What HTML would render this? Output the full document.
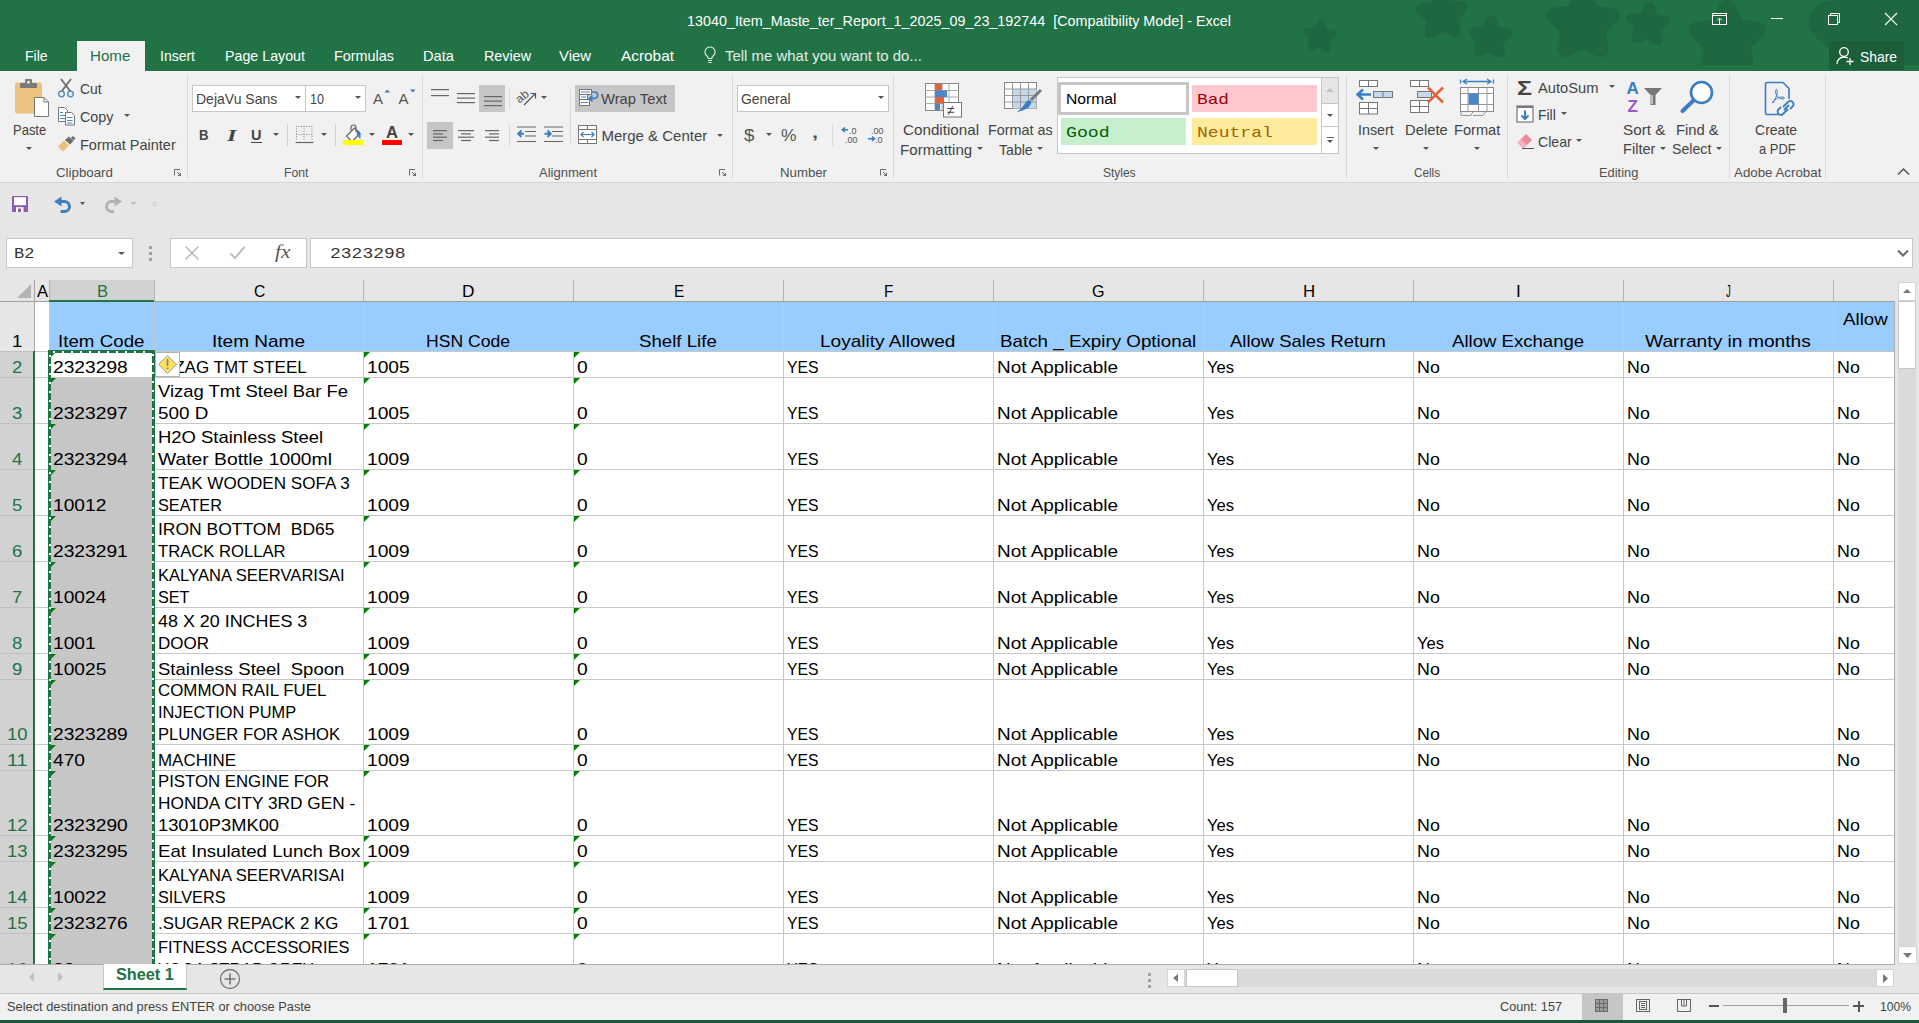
<!DOCTYPE html><html><head><meta charset="utf-8"><style>
*{margin:0;padding:0;box-sizing:border-box}
html,body{width:1919px;height:1023px;overflow:hidden;background:#fff}
body{position:relative;font-family:"Liberation Sans",sans-serif;color:#000}
.a{position:absolute}
.t{position:absolute;white-space:pre;line-height:1;transform-origin:0 0}
svg{overflow:visible}
</style></head><body><div class="a" style="left:0px;top:0px;width:1919px;height:71px;background:#217346;"></div><svg class="a" style="left:0;top:0" width="1919" height="71" viewBox="0 0 1919 71"><defs><clipPath id="tc"><rect x="0" y="0" width="1919" height="65"/></clipPath></defs><g clip-path="url(#tc)"><polygon points="1321.3,23.6 1324.5,32.0 1333.1,34.1 1326.1,39.7 1326.8,48.6 1319.3,43.7 1311.1,47.0 1313.4,38.4 1307.7,31.6 1316.6,31.2" fill="#1e6740" stroke="#1e6740" stroke-width="7.1" stroke-linejoin="round"/><polygon points="1440.9,-6.3 1447.8,6.1 1461.9,7.4 1452.3,17.8 1455.4,31.6 1442.5,25.7 1430.3,32.9 1432.0,18.8 1421.4,9.4 1435.3,6.7" fill="#1e6740" stroke="#1e6740" stroke-width="11.3" stroke-linejoin="round"/><polygon points="1490.9,19.9 1495.7,30.9 1507.5,33.3 1498.5,41.2 1499.9,53.2 1489.5,47.1 1478.6,52.1 1481.2,40.4 1473.0,31.5 1485.0,30.4" fill="#1e6740" stroke="#1e6740" stroke-width="9.7" stroke-linejoin="round"/><polygon points="1583.0,-5.0 1591.8,12.9 1611.6,15.7 1597.3,29.6 1600.6,49.3 1583.0,40.0 1565.4,49.3 1568.7,29.6 1554.4,15.7 1574.2,12.9" fill="#1e6740" stroke="#1e6740" stroke-width="16.0" stroke-linejoin="round"/><polygon points="1649.5,6.9 1653.9,18.1 1665.7,20.8 1656.4,28.5 1657.5,40.5 1647.3,34.1 1636.2,38.8 1639.2,27.1 1631.2,18.0 1643.3,17.2" fill="#1e6740" stroke="#1e6740" stroke-width="9.7" stroke-linejoin="round"/><polygon points="1727.0,8.4 1736.3,27.2 1757.1,30.2 1742.0,44.9 1745.6,65.6 1727.0,55.8 1708.4,65.6 1712.0,44.9 1696.9,30.2 1717.7,27.2" fill="#1e6740" stroke="#1e6740" stroke-width="16.8" stroke-linejoin="round"/><polygon points="1900.0,-30.0 1922.1,14.6 1971.4,21.8 1935.7,56.6 1944.1,105.7 1900.0,82.5 1855.9,105.7 1864.3,56.6 1828.6,21.8 1877.9,14.6" fill="#1e6740" stroke="#1e6740" stroke-width="39.9" stroke-linejoin="round"/></g></svg><div class="t" style="left:687.00px;top:12.80px;font-size:15px;color:#fff;transform:scaleX(0.9566);">13040_Item_Maste_ter_Report_1_2025_09_23_192744  [Compatibility Mode] - Excel</div><svg class="a" style="left:1711px;top:12px;" width="17" height="14" viewBox="0 0 17 14"><rect x="1.5" y="1.5" width="14" height="11" fill="none" stroke="#fff" stroke-width="1"/><line x1="1.5" y1="3.5" x2="15.5" y2="3.5" stroke="#fff"/><path d="M8.5 12.5V6M6 8.5L8.5 6l2.5 2.5" fill="none" stroke="#fff"/></svg><div class="a" style="left:1771px;top:18px;width:12px;height:1px;background:#fff;"></div><svg class="a" style="left:1827px;top:12px;" width="14" height="14" viewBox="0 0 14 14"><rect x="1.5" y="3.5" width="9" height="9" fill="none" stroke="#fff"/><path d="M3.5 3.5V1.5h9v9h-2" fill="none" stroke="#fff"/></svg><svg class="a" style="left:1884px;top:12px;" width="14" height="14" viewBox="0 0 14 14"><path d="M1 1L13 13M13 1L1 13" stroke="#fff" stroke-width="1.1"/></svg><div class="a" style="left:77px;top:41px;width:68px;height:30px;background:#f1f1f1;"></div><div class="t" style="left:25.40px;top:47.90px;font-size:15px;color:#fff;transform:scaleX(0.9309);">File</div><div class="t" style="left:90.40px;top:47.90px;font-size:15px;color:#217346;transform:scaleX(1.0097);">Home</div><div class="t" style="left:160.00px;top:47.90px;font-size:15px;color:#fff;transform:scaleX(0.9330);">Insert</div><div class="t" style="left:225.00px;top:47.90px;font-size:15px;color:#fff;transform:scaleX(0.9497);">Page Layout</div><div class="t" style="left:334.00px;top:47.90px;font-size:15px;color:#fff;transform:scaleX(0.9598);">Formulas</div><div class="t" style="left:423.00px;top:47.90px;font-size:15px;color:#fff;transform:scaleX(0.9784);">Data</div><div class="t" style="left:484.00px;top:47.90px;font-size:15px;color:#fff;transform:scaleX(0.9556);">Review</div><div class="t" style="left:559.00px;top:47.90px;font-size:15px;color:#fff;transform:scaleX(0.9925);">View</div><div class="t" style="left:621.00px;top:47.90px;font-size:15px;color:#fff;transform:scaleX(1.0253);">Acrobat</div><svg class="a" style="left:703px;top:45px;" width="14" height="20" viewBox="0 0 14 20"><path d="M7 2a5 5 0 0 0-3 9c.8.7 1.2 1.5 1.2 2.5h3.6c0-1 .4-1.8 1.2-2.5A5 5 0 0 0 7 2z" fill="none" stroke="#e0ebe4" stroke-width="1.1"/><path d="M5 15.5h4M5.3 17.5h3.4" stroke="#e0ebe4" stroke-width="1.2"/></svg><div class="t" style="left:724.70px;top:47.90px;font-size:15px;color:#e3ede7;transform:scaleX(0.9960);">Tell me what you want to do...</div><div class="a" style="left:1829px;top:41px;width:75px;height:29px;background:#1b5e38;"></div><svg class="a" style="left:1835px;top:45px;" width="22" height="22" viewBox="0 0 22 22"><circle cx="9" cy="7" r="4.3" fill="none" stroke="#fff" stroke-width="1.3"/><path d="M2 19c0-4 3-7 7-7 1.5 0 2.7.4 3.7 1" fill="none" stroke="#fff" stroke-width="1.3"/><path d="M15 13v7M11.5 16.5h7" stroke="#fff" stroke-width="1.3"/></svg><div class="t" style="left:1859.50px;top:48.80px;font-size:15px;color:#fff;transform:scaleX(0.9244);">Share</div><div class="a" style="left:0px;top:71px;width:1919px;height:111px;background:#f1f1f1;"></div><div class="a" style="left:0px;top:182px;width:1919px;height:1px;background:#d5d5d5;"></div><div class="a" style="left:187px;top:75px;width:1px;height:103px;background:#dadada;"></div><div class="a" style="left:422px;top:75px;width:1px;height:103px;background:#dadada;"></div><div class="a" style="left:732px;top:75px;width:1px;height:103px;background:#dadada;"></div><div class="a" style="left:893px;top:75px;width:1px;height:103px;background:#dadada;"></div><div class="a" style="left:1346px;top:75px;width:1px;height:103px;background:#dadada;"></div><div class="a" style="left:1507px;top:75px;width:1px;height:103px;background:#dadada;"></div><div class="a" style="left:1729px;top:75px;width:1px;height:103px;background:#dadada;"></div><div class="a" style="left:1825px;top:75px;width:1px;height:103px;background:#dadada;"></div><svg class="a" style="left:14px;top:78px;" width="36" height="40" viewBox="0 0 36 40"><rect x="1" y="4.5" width="27" height="31" rx="2" fill="#ebc37f"/><rect x="6" y="5" width="17" height="5" rx="1" fill="#7a7a7a"/><rect x="11" y="1" width="7" height="6" rx="1" fill="#7a7a7a"/><rect x="13.3" y="3" width="2.4" height="2.4" fill="#fff"/><path d="M20.5 19.5h9.5l4.5 4.5v14.5h-14z" fill="#fff" stroke="#777" stroke-width="1"/><path d="M30 19.5v4.5h4.5" fill="none" stroke="#777" stroke-width="1"/></svg><div class="t" style="left:12.50px;top:122.40px;font-size:15px;color:#444444;transform:scaleX(0.8656);">Paste</div><svg class="a" style="left:26.0px;top:147.0px;" width="6" height="4" viewBox="0 0 6 4"><polygon points="0,0 6,0 3.0,3" fill="#555"/></svg><svg class="a" style="left:57px;top:78px;" width="19" height="20" viewBox="0 0 19 20"><path d="M4.5 13.5L14 1M13.5 13.5L4 1" stroke="#6d6d6d" stroke-width="1.8"/><circle cx="4.5" cy="16" r="2.8" fill="none" stroke="#4a86c8" stroke-width="1.3"/><circle cx="13.5" cy="16" r="2.8" fill="none" stroke="#4a86c8" stroke-width="1.3"/></svg><div class="t" style="left:80.30px;top:81.20px;font-size:15px;color:#444444;transform:scaleX(0.9296);">Cut</div><svg class="a" style="left:57px;top:106px;" width="20" height="20" viewBox="0 0 20 20"><path d="M1.5 1.5h6l3 3v11h-9z" fill="#fff" stroke="#777"/><path d="M3 6.5h3M3 9.5h5M3 12.5h5" stroke="#4a86c8"/><path d="M8.5 6.5h6l3 3v9.5h-9z" fill="#fff" stroke="#777"/><path d="M10 11.5h5.5M10 14.5h5.5M10 17h5.5" stroke="#4a86c8"/></svg><div class="t" style="left:80.30px;top:109.00px;font-size:15px;color:#444444;transform:scaleX(0.9538);">Copy</div><svg class="a" style="left:124.0px;top:114.0px;" width="6" height="4" viewBox="0 0 6 4"><polygon points="0,0 6,0 3.0,3" fill="#555"/></svg><svg class="a" style="left:57px;top:136px;" width="20" height="17" viewBox="0 0 20 17"><path d="M1 10.5L7 4.5l5 5-6 6z" fill="#eabf7c"/><path d="M8 4L12 0.5l4.5 4.5L13 8.5z" fill="#6d6d6d"/><path d="M14 1.5l2-1.5 2.5 2.5-2 2z" fill="#6d6d6d"/></svg><div class="t" style="left:80.30px;top:136.90px;font-size:15px;color:#444444;transform:scaleX(0.9647);">Format Painter</div><div class="t" style="left:55.70px;top:165.50px;font-size:13px;color:#505050;transform:scaleX(1.0226);">Clipboard</div><svg class="a" style="left:174px;top:169px;" width="8" height="8" viewBox="0 0 8 8"><path d="M0.5 6.5V0.5H6" fill="none" stroke="#6a6a6a" stroke-width="1"/><path d="M3 3L6 6" stroke="#6a6a6a" stroke-width="1"/><polygon points="7,3.5 7,7 3.5,7" fill="#6a6a6a"/></svg><div class="a" style="left:192px;top:85px;width:114px;height:27px;background:#fff;border:1px solid #c6c6c6"></div><div class="a" style="left:305px;top:85px;width:61px;height:27px;background:#fff;border:1px solid #c6c6c6"></div><div class="t" style="left:195.60px;top:91.40px;font-size:15px;color:#444444;transform:scaleX(0.9345);">DejaVu Sans</div><svg class="a" style="left:294.8px;top:96.0px;" width="6" height="4" viewBox="0 0 6 4"><polygon points="0,0 6,0 3.0,3" fill="#555"/></svg><div class="t" style="left:310.00px;top:91.40px;font-size:15px;color:#444444;transform:scaleX(0.8391);">10</div><svg class="a" style="left:354.8px;top:96.0px;" width="6" height="4" viewBox="0 0 6 4"><polygon points="0,0 6,0 3.0,3" fill="#555"/></svg><svg class="a" style="left:372px;top:88px;" width="24" height="18" viewBox="0 0 24 18"><text x="1" y="16" font-family="Liberation Sans" font-size="15" fill="#555">A</text><path d="M12.5 4.5l2.8-3 2.8 3z" fill="#3a7dc4"/></svg><svg class="a" style="left:398px;top:88px;" width="20" height="18" viewBox="0 0 20 18"><text x="0.5" y="16" font-family="Liberation Sans" font-size="15" fill="#555">A</text><path d="M12 1.5l2.8 3 2.8-3z" fill="#3a7dc4"/></svg><div class="t" style="left:199.40px;top:127.28px;font-size:15.5px;color:#444;font-weight:bold;transform:scaleX(0.8487);">B</div><div class="t" style="left:226.50px;top:127.60px;font-size:16px;color:#444;font-family:'Liberation Serif';font-weight:bold;font-style:italic;transform:scaleX(1.5257);">I</div><div class="t" style="left:251.00px;top:127.28px;font-size:15.5px;color:#444;font-weight:bold;transform:scaleX(0.9380);">U</div><div class="a" style="left:251px;top:142px;width:11px;height:1px;background:#444;"></div><svg class="a" style="left:273.0px;top:133.0px;" width="6" height="4" viewBox="0 0 6 4"><polygon points="0,0 6,0 3.0,3" fill="#555"/></svg><div class="a" style="left:287px;top:124px;width:1px;height:22px;background:#d0d0d0;"></div><svg class="a" style="left:295px;top:125px;" width="19" height="19" viewBox="0 0 19 19"><path d="M1 1.5h16M1 9.5h16M1.5 1v15M9 1v15M17 1v15" stroke="#888" stroke-width="1" stroke-dasharray="1 1.5" fill="none"/><path d="M0.5 17.5h18" stroke="#666" stroke-width="1.2"/></svg><svg class="a" style="left:321.0px;top:133.0px;" width="6" height="4" viewBox="0 0 6 4"><polygon points="0,0 6,0 3.0,3" fill="#555"/></svg><div class="a" style="left:335px;top:124px;width:1px;height:22px;background:#d0d0d0;"></div><svg class="a" style="left:342px;top:123px;" width="22" height="23" viewBox="0 0 22 23"><path d="M12.5 5L4.5 13l5.5 5.5 8-8z" fill="#fff" stroke="#666" stroke-width="1.2" stroke-linejoin="round"/><path d="M9 7.5V4.5a2.5 2.5 0 0 1 5 0V9.5" fill="none" stroke="#666" stroke-width="1.2"/><path d="M15 7c3 .8 4.5 3.5 3.2 9.5-1.3-2.5-2.5-4-3.5-5" fill="#3d7fc1"/><rect x="1" y="17" width="20" height="5" fill="#ffff00"/></svg><svg class="a" style="left:369.0px;top:133.0px;" width="6" height="4" viewBox="0 0 6 4"><polygon points="0,0 6,0 3.0,3" fill="#555"/></svg><div class="t" style="left:385.80px;top:124.31px;font-size:17px;color:#444;font-weight:bold;transform:scaleX(0.9774);">A</div><div class="a" style="left:382px;top:140px;width:20px;height:5px;background:#ff0000;"></div><svg class="a" style="left:407.7px;top:133.0px;" width="6" height="4" viewBox="0 0 6 4"><polygon points="0,0 6,0 3.0,3" fill="#555"/></svg><div class="t" style="left:283.80px;top:165.50px;font-size:13px;color:#505050;transform:scaleX(0.9342);">Font</div><svg class="a" style="left:408.5px;top:169px;" width="8" height="8" viewBox="0 0 8 8"><path d="M0.5 6.5V0.5H6" fill="none" stroke="#6a6a6a" stroke-width="1"/><path d="M3 3L6 6" stroke="#6a6a6a" stroke-width="1"/><polygon points="7,3.5 7,7 3.5,7" fill="#6a6a6a"/></svg><svg class="a" style="left:430.5px;top:88.5px;" width="20" height="20" viewBox="0 0 20 20"><rect x="0" y="0.0" width="18" height="1.2" fill="#666"/><rect x="0" y="6.0" width="18" height="1.2" fill="#666"/></svg><svg class="a" style="left:457px;top:93px;" width="20" height="20" viewBox="0 0 20 20"><rect x="0" y="0.0" width="18" height="1.2" fill="#666"/><rect x="0" y="4.5" width="18" height="1.2" fill="#666"/><rect x="0" y="9.0" width="18" height="1.2" fill="#666"/></svg><div class="a" style="left:479px;top:85px;width:26px;height:27px;background:#c6c6c6;"></div><svg class="a" style="left:483.5px;top:96px;" width="20" height="20" viewBox="0 0 20 20"><rect x="0" y="0.0" width="18" height="1.2" fill="#666"/><rect x="0" y="4.5" width="18" height="1.2" fill="#666"/><rect x="0" y="9.0" width="18" height="1.2" fill="#666"/></svg><div class="a" style="left:509px;top:87px;width:1px;height:22px;background:#dadada;"></div><svg class="a" style="left:516px;top:87px;" width="22" height="20" viewBox="0 0 22 20"><text x="0" y="13" font-family="Liberation Sans" font-size="12" fill="#555" transform="rotate(-40 7 10)">ab</text><path d="M8 18L19 7M14.5 6.5H19.5V11.5" fill="none" stroke="#555" stroke-width="1.2"/></svg><svg class="a" style="left:541.4px;top:96.0px;" width="6" height="4" viewBox="0 0 6 4"><polygon points="0,0 6,0 3.0,3" fill="#555"/></svg><div class="a" style="left:570px;top:89px;width:1px;height:54px;background:#dadada;"></div><div class="a" style="left:575px;top:85px;width:100px;height:27px;background:#c6c6c6;"></div><svg class="a" style="left:578px;top:88px;" width="21" height="20" viewBox="0 0 21 20"><rect x="1.5" y="1.5" width="12" height="5" fill="#fff" stroke="#777"/><rect x="1.5" y="6.5" width="8" height="5" fill="#fff" stroke="#777"/><rect x="1.5" y="11.5" width="10" height="6" fill="#fff" stroke="#777"/><path d="M3 4h9M3 9h5M3 14.5h7" stroke="#4a86c8"/><path d="M14 4h2.5a3.2 3.2 0 0 1 0 6.4H12" fill="none" stroke="#3a7dc4" stroke-width="1.6"/><path d="M14.5 7.5L11.5 10.4l3 2.9" fill="none" stroke="#3a7dc4" stroke-width="1.6"/></svg><div class="t" style="left:601.40px;top:91.10px;font-size:15px;color:#444444;transform:scaleX(0.9845);">Wrap Text</div><div class="a" style="left:427px;top:122px;width:26px;height:27px;background:#c6c6c6;"></div><svg class="a" style="left:433px;top:129.5px;" width="20" height="20" viewBox="0 0 20 20"><rect x="0" y="0.0" width="14" height="1.2" fill="#666"/><rect x="0" y="3.3" width="10" height="1.2" fill="#666"/><rect x="0" y="6.6" width="14" height="1.2" fill="#666"/><rect x="0" y="9.9" width="10" height="1.2" fill="#666"/></svg><svg class="a" style="left:458px;top:129.5px;" width="20" height="20" viewBox="0 0 20 20"><rect x="0" y="0.0" width="16" height="1.2" fill="#666"/><rect x="3" y="3.3" width="10" height="1.2" fill="#666"/><rect x="0" y="6.6" width="16" height="1.2" fill="#666"/><rect x="3" y="9.9" width="10" height="1.2" fill="#666"/></svg><svg class="a" style="left:485px;top:129.5px;" width="20" height="20" viewBox="0 0 20 20"><rect x="0" y="0.0" width="14" height="1.2" fill="#666"/><rect x="4" y="3.3" width="10" height="1.2" fill="#666"/><rect x="0" y="6.6" width="14" height="1.2" fill="#666"/><rect x="4" y="9.9" width="10" height="1.2" fill="#666"/></svg><div class="a" style="left:509px;top:124px;width:1px;height:22px;background:#dadada;"></div><svg class="a" style="left:517px;top:126px;" width="20" height="18" viewBox="0 0 20 18"><path d="M0 1h19M8 5.5h11M8 10h11M0 15.5h19" stroke="#666" stroke-width="1.2"/><path d="M7 7.8H1.5M4.5 4.5L1.3 7.8 4.5 11" fill="none" stroke="#3a7dc4" stroke-width="2"/></svg><svg class="a" style="left:544px;top:126px;" width="20" height="18" viewBox="0 0 20 18"><path d="M0 1h19M8 5.5h11M8 10h11M0 15.5h19" stroke="#666" stroke-width="1.2"/><path d="M0.5 7.8H6.5M3.5 4.5l3.2 3.3L3.5 11" fill="none" stroke="#3a7dc4" stroke-width="2"/></svg><svg class="a" style="left:577px;top:124px;" width="21" height="21" viewBox="0 0 21 21"><rect x="1.5" y="1.5" width="18" height="18" fill="#fff" stroke="#777"/><path d="M1.5 5.5h18M1.5 15.5h18M10.5 1.5v4M10.5 15.5v4" stroke="#777"/><path d="M4 10.5h13M6.5 8l-2.5 2.5 2.5 2.5M14.5 8l2.5 2.5-2.5 2.5" fill="none" stroke="#3a7dc4" stroke-width="1.2"/></svg><div class="t" style="left:601.40px;top:128.10px;font-size:15px;color:#444444;">Merge &amp; Center</div><svg class="a" style="left:717.0px;top:133.5px;" width="6" height="4" viewBox="0 0 6 4"><polygon points="0,0 6,0 3.0,3" fill="#555"/></svg><div class="t" style="left:539.00px;top:165.50px;font-size:13px;color:#505050;transform:scaleX(1.0033);">Alignment</div><svg class="a" style="left:718.5px;top:169px;" width="8" height="8" viewBox="0 0 8 8"><path d="M0.5 6.5V0.5H6" fill="none" stroke="#6a6a6a" stroke-width="1"/><path d="M3 3L6 6" stroke="#6a6a6a" stroke-width="1"/><polygon points="7,3.5 7,7 3.5,7" fill="#6a6a6a"/></svg><div class="a" style="left:737px;top:85px;width:152px;height:27px;background:#fff;border:1px solid #c6c6c6"></div><div class="t" style="left:740.50px;top:91.20px;font-size:15px;color:#444444;transform:scaleX(0.9276);">General</div><svg class="a" style="left:877.6px;top:96.0px;" width="6" height="4" viewBox="0 0 6 4"><polygon points="0,0 6,0 3.0,3" fill="#555"/></svg><div class="t" style="left:744.40px;top:127.11px;font-size:17px;color:#555;transform:scaleX(1.1000);">$</div><svg class="a" style="left:766.0px;top:133.0px;" width="6" height="4" viewBox="0 0 6 4"><polygon points="0,0 6,0 3.0,3" fill="#555"/></svg><div class="t" style="left:780.80px;top:127.96px;font-size:16px;color:#555;transform:scaleX(1.0895);">%</div><div class="t" style="left:811.50px;top:123.61px;font-size:17px;color:#555;font-weight:bold;transform:scaleX(1.2703);">,</div><div class="a" style="left:832px;top:124px;width:1px;height:22px;background:#dadada;"></div><svg class="a" style="left:841px;top:126px;" width="18" height="18" viewBox="0 0 18 18"><path d="M7 3.8H1.5M4 1.5L1.3 3.8 4 6" fill="none" stroke="#3a7dc4" stroke-width="1.6"/><text x="8" y="8" font-family="Liberation Sans" font-size="9" fill="#555">.0</text><text x="4" y="16.5" font-family="Liberation Sans" font-size="9" fill="#555">.00</text></svg><svg class="a" style="left:867px;top:126px;" width="18" height="18" viewBox="0 0 18 18"><text x="4" y="8" font-family="Liberation Sans" font-size="9" fill="#555">.00</text><path d="M1 12.8h6M5 10.5l2.5 2.3L5 15" fill="none" stroke="#3a7dc4" stroke-width="1.6"/><text x="8" y="16.5" font-family="Liberation Sans" font-size="9" fill="#555">.0</text></svg><div class="t" style="left:779.60px;top:165.50px;font-size:13px;color:#505050;transform:scaleX(1.0165);">Number</div><svg class="a" style="left:880px;top:169px;" width="8" height="8" viewBox="0 0 8 8"><path d="M0.5 6.5V0.5H6" fill="none" stroke="#6a6a6a" stroke-width="1"/><path d="M3 3L6 6" stroke="#6a6a6a" stroke-width="1"/><polygon points="7,3.5 7,7 3.5,7" fill="#6a6a6a"/></svg><svg class="a" style="left:924px;top:82px;" width="40" height="36" viewBox="0 0 40 36"><rect x="1.5" y="1.5" width="33" height="27" fill="#fff" stroke="#888"/><path d="M1.5 8.5h33M1.5 15h33M1.5 21.5h33M11 1.5v27M18 1.5v27M25 1.5v27" stroke="#aaa"/><rect x="11" y="2" width="7" height="6.5" fill="#e0643c"/><rect x="11" y="8.5" width="12" height="6.5" fill="#4a86c8"/><rect x="11" y="15" width="9" height="6.5" fill="#e0643c"/><rect x="11" y="21.5" width="5" height="6.5" fill="#4a86c8"/><rect x="19.5" y="20.5" width="18" height="14.5" fill="#fff" stroke="#777"/><text x="23" y="33" font-family="Liberation Sans" font-size="14" fill="#444">≠</text></svg><div class="t" style="left:903.10px;top:122.30px;font-size:15px;color:#444444;transform:scaleX(1.0140);">Conditional</div><div class="t" style="left:900.10px;top:142.20px;font-size:15px;color:#444444;transform:scaleX(1.0071);">Formatting</div><svg class="a" style="left:977.0px;top:146.5px;" width="6" height="4" viewBox="0 0 6 4"><polygon points="0,0 6,0 3.0,3" fill="#555"/></svg><svg class="a" style="left:1003px;top:81px;" width="40" height="37" viewBox="0 0 40 37"><rect x="1.5" y="1.5" width="32" height="26" fill="#fff" stroke="#888"/><rect x="9.5" y="8" width="24" height="19.5" fill="#c5d9ee"/><path d="M1.5 8h32M1.5 14.5h32M1.5 21h32M9.5 1.5v26M17.5 1.5v26M25.5 1.5v26" stroke="#999"/><path d="M27 18l10-10 2 2-10 10z" fill="#777"/><path d="M21 24c2-4 5-6 7-4 1 2-1 6-6 8.5-2 1-6 2-9 3 3-2 6-4 8-7.5z" fill="#3a7dc4"/></svg><div class="t" style="left:988.40px;top:122.30px;font-size:15px;color:#444444;transform:scaleX(0.9568);">Format as</div><div class="t" style="left:998.80px;top:142.20px;font-size:15px;color:#444444;transform:scaleX(0.9398);">Table</div><svg class="a" style="left:1037.0px;top:146.5px;" width="6" height="4" viewBox="0 0 6 4"><polygon points="0,0 6,0 3.0,3" fill="#555"/></svg><div class="a" style="left:1057px;top:77px;width:265px;height:77px;background:#fff;border:1px solid #c6c6c6"></div><div class="a" style="left:1058px;top:82px;width:131px;height:33px;background:#fff;border:3px solid #c6c6c6"></div><div class="t" style="left:1066.40px;top:90.68px;font-size:15.5px;color:#000;transform:scaleX(1.0110);">Normal</div><div class="a" style="left:1192px;top:85px;width:125px;height:27px;background:#ffc7ce;"></div><div class="t" style="left:1197.30px;top:93.10px;font-size:15px;color:#9c0006;font-family:'Liberation Mono';transform:scaleX(1.1850);">Bad</div><div class="a" style="left:1061px;top:118px;width:125px;height:26.5px;background:#c6efce;"></div><div class="t" style="left:1066.40px;top:126.40px;font-size:15px;color:#006100;font-family:'Liberation Mono';transform:scaleX(1.2109);">Good</div><div class="a" style="left:1192px;top:118px;width:125px;height:26.5px;background:#ffeb9c;"></div><div class="t" style="left:1197.10px;top:126.40px;font-size:15px;color:#9c6500;font-family:'Liberation Mono';transform:scaleX(1.2030);">Neutral</div><div class="a" style="left:1321px;top:77px;width:18px;height:77px;background:#fff;border:1px solid #c6c6c6"></div><div class="a" style="left:1322px;top:78px;width:16px;height:26px;background:#e6e6e6;"></div><div class="a" style="left:1321px;top:103px;width:18px;height:1px;background:#c6c6c6;"></div><div class="a" style="left:1321px;top:126px;width:18px;height:1px;background:#c6c6c6;"></div><svg class="a" style="left:1326px;top:88px;" width="8" height="5" viewBox="0 0 8 5"><polygon points="0,4 8,4 4,0" fill="#c0c0c0"/></svg><svg class="a" style="left:1327.0px;top:113.5px;" width="6" height="4" viewBox="0 0 6 4"><polygon points="0,0 6,0 3.0,3" fill="#555"/></svg><div class="a" style="left:1326.5px;top:137px;width:7px;height:1px;background:#666;"></div><svg class="a" style="left:1327.0px;top:139.5px;" width="6" height="4" viewBox="0 0 6 4"><polygon points="0,0 6,0 3.0,3" fill="#555"/></svg><div class="t" style="left:1103.00px;top:165.50px;font-size:13px;color:#505050;transform:scaleX(0.9209);">Styles</div><svg class="a" style="left:1356px;top:79px;" width="38" height="37" viewBox="0 0 38 37"><rect x="3.5" y="1.5" width="18" height="6" fill="#fff" stroke="#777"/><path d="M12.5 1.5v6" stroke="#777"/><rect x="17.5" y="12.5" width="19" height="6" fill="#c5d9ee" stroke="#777"/><path d="M27 12.5v6" stroke="#777"/><path d="M1.5 15.5H15M7 10.5L1.5 15.5 7 20.5" fill="none" stroke="#3a7dc4" stroke-width="2.5"/><rect x="3.5" y="23.5" width="18" height="11.5" fill="#fff" stroke="#777"/><path d="M3.5 29.5h18M12.5 23.5v11.5" stroke="#777"/></svg><div class="t" style="left:1358.20px;top:122.10px;font-size:15px;color:#444444;transform:scaleX(0.9543);">Insert</div><svg class="a" style="left:1373.0px;top:147.0px;" width="6" height="4" viewBox="0 0 6 4"><polygon points="0,0 6,0 3.0,3" fill="#555"/></svg><svg class="a" style="left:1409px;top:79px;" width="38" height="34" viewBox="0 0 38 34"><rect x="1.5" y="1.5" width="18" height="6" fill="#fff" stroke="#777"/><path d="M10.5 1.5v6" stroke="#777"/><rect x="8.5" y="12.5" width="14" height="6" fill="#c5d9ee" stroke="#777"/><rect x="1.5" y="21.5" width="18" height="12" fill="#fff" stroke="#777"/><path d="M1.5 27.5h18M10.5 21.5v12" stroke="#777"/><path d="M19 8.5l15 15M34 8.5l-15 15" stroke="#e0643c" stroke-width="2.5"/></svg><div class="t" style="left:1405.00px;top:122.10px;font-size:15px;color:#444444;transform:scaleX(0.9848);">Delete</div><svg class="a" style="left:1423.0px;top:147.0px;" width="6" height="4" viewBox="0 0 6 4"><polygon points="0,0 6,0 3.0,3" fill="#555"/></svg><svg class="a" style="left:1459px;top:78px;" width="36" height="38" viewBox="0 0 36 38"><path d="M1.5 1.5v4M34.5 1.5v4M4 3.5h28M8 1l-4 2.5 4 2.5M28 1l4 2.5-4 2.5" fill="none" stroke="#3a7dc4" stroke-width="1.3"/><rect x="1.5" y="9.5" width="33" height="24" fill="#fff" stroke="#888"/><path d="M1.5 15.5h33M1.5 26.5h33M9 9.5v24M19.5 9.5v24M28 9.5v24" stroke="#999"/><rect x="9.5" y="15.5" width="10" height="11" fill="#4a86c8"/><path d="M2 33.5v4h10l2-4M14 37.5h10l3-4" fill="none" stroke="#999"/></svg><div class="t" style="left:1453.60px;top:122.10px;font-size:15px;color:#444444;transform:scaleX(0.9746);">Format</div><svg class="a" style="left:1474.0px;top:147.0px;" width="6" height="4" viewBox="0 0 6 4"><polygon points="0,0 6,0 3.0,3" fill="#555"/></svg><div class="t" style="left:1413.70px;top:165.50px;font-size:13px;color:#505050;transform:scaleX(0.8998);">Cells</div><div class="t" style="left:1516.50px;top:77.67px;font-size:20px;color:#444;font-weight:bold;transform:scaleX(1.2498);">Σ</div><div class="t" style="left:1538.20px;top:80.20px;font-size:15px;color:#444444;transform:scaleX(0.9806);">AutoSum</div><svg class="a" style="left:1608.5px;top:85.0px;" width="6" height="4" viewBox="0 0 6 4"><polygon points="0,0 6,0 3.0,3" fill="#555"/></svg><svg class="a" style="left:1516px;top:105px;" width="18" height="18" viewBox="0 0 18 18"><rect x="1" y="1" width="16" height="16" fill="#fff" stroke="#777" stroke-width="1.2"/><rect x="1" y="1" width="16" height="2" fill="#777"/><path d="M9 5.5v8.5M5.5 10.5L9 14l3.5-3.5" fill="none" stroke="#3a7dc4" stroke-width="2"/></svg><div class="t" style="left:1538.20px;top:106.50px;font-size:15px;color:#444444;transform:scaleX(0.9290);">Fill</div><svg class="a" style="left:1560.7px;top:112.0px;" width="6" height="4" viewBox="0 0 6 4"><polygon points="0,0 6,0 3.0,3" fill="#555"/></svg><svg class="a" style="left:1516px;top:132px;" width="20" height="18" viewBox="0 0 20 18"><path d="M1.5 10.5L10 2l6 6-8.5 8.5z" fill="#e98a9b"/><path d="M1.5 10.5l3.5-3.5 6 6-3.5 3.5z" fill="#f3b4c0"/><path d="M6 16.5h12" stroke="#555" stroke-width="1"/></svg><div class="t" style="left:1538.20px;top:133.50px;font-size:15px;color:#444444;transform:scaleX(0.9430);">Clear</div><svg class="a" style="left:1575.6px;top:139.0px;" width="6" height="4" viewBox="0 0 6 4"><polygon points="0,0 6,0 3.0,3" fill="#555"/></svg><svg class="a" style="left:1626px;top:80px;" width="38" height="33" viewBox="0 0 38 33"><text x="0.5" y="14" font-family="Liberation Sans" font-size="17" font-weight="bold" fill="#3a7dc4">A</text><text x="1.5" y="31.5" font-family="Liberation Sans" font-size="17" font-weight="bold" fill="#9b59c6">Z</text><path d="M18 8h18l-6.5 7v10h-5V15z" fill="#777"/><path d="M26 15v9" stroke="#f1f1f1" stroke-width="1.2"/></svg><div class="t" style="left:1623.30px;top:122.30px;font-size:15px;color:#444444;transform:scaleX(1.0172);">Sort &amp;</div><div class="t" style="left:1623.30px;top:141.30px;font-size:15px;color:#444444;transform:scaleX(0.9720);">Filter</div><svg class="a" style="left:1659.7px;top:146.5px;" width="6" height="4" viewBox="0 0 6 4"><polygon points="0,0 6,0 3.0,3" fill="#555"/></svg><svg class="a" style="left:1678px;top:79px;" width="36" height="36" viewBox="0 0 36 36"><circle cx="23.5" cy="13.5" r="10.5" fill="#fff" stroke="#3a7dc4" stroke-width="2.6"/><path d="M15.5 21.5L4.5 32" stroke="#3a7dc4" stroke-width="4" stroke-linecap="round"/></svg><div class="t" style="left:1675.60px;top:122.30px;font-size:15px;color:#444444;transform:scaleX(0.9850);">Find &amp;</div><div class="t" style="left:1672.30px;top:141.30px;font-size:15px;color:#444444;transform:scaleX(0.9451);">Select</div><svg class="a" style="left:1716.3px;top:146.5px;" width="6" height="4" viewBox="0 0 6 4"><polygon points="0,0 6,0 3.0,3" fill="#555"/></svg><div class="t" style="left:1598.75px;top:165.50px;font-size:13px;color:#505050;transform:scaleX(0.9887);">Editing</div><svg class="a" style="left:1764px;top:81px;" width="34" height="37" viewBox="0 0 34 37"><path d="M3 1.5h16l6 6V18M14 33.5H3a1.5 1.5 0 0 1-1.5-1.5V3a1.5 1.5 0 0 1 1.5-1.5" fill="none" stroke="#3a7dc4" stroke-width="1.6"/><path d="M9 22c3-5 5-10 4-13-1-2-2 1-1 4 1 3 4 5 7 5 2 0 2-2-1-2-4 0-8 3-10 6" fill="none" stroke="#3a7dc4" stroke-width="1"/><path d="M19 26l5-5a3 3 0 0 1 4.5 4.5l-2.5 2.5M24 28l-5 5a3 3 0 0 1-4.5-4.5l2.5-2.5M20 29l5-5" fill="none" stroke="#3a7dc4" stroke-width="1.8"/></svg><div class="t" style="left:1755.40px;top:122.30px;font-size:15px;color:#444444;transform:scaleX(0.9351);">Create</div><div class="t" style="left:1758.70px;top:141.30px;font-size:15px;color:#444444;transform:scaleX(0.8610);">a PDF</div><div class="t" style="left:1733.80px;top:165.50px;font-size:13px;color:#505050;transform:scaleX(1.0244);">Adobe Acrobat</div><svg class="a" style="left:1897px;top:167px;" width="13" height="9" viewBox="0 0 13 9"><path d="M1 7.5L6.5 2 12 7.5" fill="none" stroke="#555" stroke-width="1.5"/></svg><div class="a" style="left:0px;top:183px;width:1919px;height:97px;background:#e6e6e6;"></div><svg class="a" style="left:12px;top:196px;" width="16" height="16" viewBox="0 0 16 16"><rect x="0" y="0" width="16" height="16" rx="0.8" fill="#8a5ab5"/><rect x="2" y="1.2" width="12" height="8" fill="#fff"/><rect x="4" y="11.2" width="7.5" height="4.8" fill="#fff"/><rect x="6" y="12.5" width="3" height="3.5" fill="#8a5ab5"/></svg><svg class="a" style="left:53px;top:196px;" width="20" height="17" viewBox="0 0 20 17"><path d="M7 5.5h4.5a5 5 0 0 1 0 10H7.5" fill="none" stroke="#3d7fc1" stroke-width="3"/><polygon points="1,5.5 8.5,0.5 8.5,10.5" fill="#3d7fc1"/></svg><svg class="a" style="left:80.0px;top:202.0px;" width="5" height="4" viewBox="0 0 5 4"><polygon points="0,0 5,0 2.5,3" fill="#555"/></svg><svg class="a" style="left:103px;top:196px;" width="20" height="17" viewBox="0 0 20 17"><path d="M13 5.5H8.5a5 5 0 0 0 0 10H11" fill="none" stroke="#b2b2b2" stroke-width="3"/><polygon points="19,5.5 11.5,0.5 11.5,10.5" fill="#b2b2b2"/></svg><svg class="a" style="left:130.5px;top:202.0px;" width="5" height="4" viewBox="0 0 5 4"><polygon points="0,0 5,0 2.5,3" fill="#bbb"/></svg><div class="a" style="left:152px;top:202px;width:5px;height:1px;background:#d0d0d0;"></div><svg class="a" style="left:152.0px;top:203.5px;" width="5" height="4" viewBox="0 0 5 4"><polygon points="0,0 5,0 2.5,3" fill="#d0d0d0"/></svg><div class="a" style="left:6px;top:238px;width:127px;height:30px;background:#fff;border:1px solid #c6c6c6"></div><div class="t" style="left:13.60px;top:247.00px;font-size:15px;color:#333;font-family:'Liberation Mono';transform:scaleX(1.1331);">B2</div><svg class="a" style="left:117.5px;top:251.5px;" width="7" height="4" viewBox="0 0 7 4"><polygon points="0,0 7,0 3.5,3" fill="#555"/></svg><svg class="a" style="left:148px;top:245px;" width="6" height="18" viewBox="0 0 6 18"><rect x="1" y="1" width="3" height="3" fill="#a0a0a0"/><rect x="1" y="7" width="3" height="3" fill="#a0a0a0"/><rect x="1" y="13" width="3" height="3" fill="#a0a0a0"/></svg><div class="a" style="left:170px;top:238px;width:137px;height:30px;background:#fff;border:1px solid #c6c6c6"></div><svg class="a" style="left:184px;top:245px;" width="16" height="16" viewBox="0 0 16 16"><path d="M1.5 1.5L14.5 14.5M14.5 1.5L1.5 14.5" stroke="#bdbdbd" stroke-width="1.6"/></svg><svg class="a" style="left:229px;top:245px;" width="17" height="16" viewBox="0 0 17 16"><path d="M1.5 8.5L6 13 15.5 2" fill="none" stroke="#bdbdbd" stroke-width="2"/></svg><div class="t" style="left:274.50px;top:243.10px;font-size:18px;color:#555;font-family:'Liberation Serif';font-style:italic;transform:scaleX(1.1932);">fx</div><div class="a" style="left:310px;top:238px;width:1603px;height:30px;background:#fff;border:1px solid #c6c6c6"></div><div class="t" style="left:329.60px;top:246.92px;font-size:15.5px;color:#333;font-family:'Liberation Mono';transform:scaleX(1.1611);">2323298</div><svg class="a" style="left:1897px;top:249px;" width="12" height="8" viewBox="0 0 12 8"><path d="M1 1.5L6 6.5 11 1.5" fill="none" stroke="#666" stroke-width="2"/></svg><div class="a" style="left:0;top:280px;width:1895px;height:684px;background:#fff;overflow:hidden"><div class="a" style="left:0;top:-280px;width:1895px;height:1023px"><div class="a" style="left:0px;top:280px;width:1895px;height:21px;background:#e6e6e6;"></div><div class="a" style="left:49px;top:280px;width:105px;height:21px;background:#d2d2d2;"></div><div class="a" style="left:49px;top:301px;width:1846px;height:50px;background:#99ccff;"></div><div class="a" style="left:49px;top:377px;width:105px;height:587px;background:#c6c6c6;"></div><div class="a" style="left:0px;top:301px;width:34px;height:50px;background:#e6e6e6;"></div><div class="a" style="left:0px;top:351px;width:34px;height:613px;background:#d2d2d2;"></div><div class="a" style="left:34px;top:280px;width:1px;height:21px;background:#b4b4b4;"></div><div class="a" style="left:49px;top:301px;width:1px;height:663px;background:#c8c8c8;"></div><div class="a" style="left:49px;top:280px;width:1px;height:21px;background:#b4b4b4;"></div><div class="a" style="left:154px;top:301px;width:1px;height:663px;background:#c8c8c8;"></div><div class="a" style="left:154px;top:280px;width:1px;height:21px;background:#b4b4b4;"></div><div class="a" style="left:363px;top:301px;width:1px;height:663px;background:#c8c8c8;"></div><div class="a" style="left:363px;top:280px;width:1px;height:21px;background:#b4b4b4;"></div><div class="a" style="left:573px;top:301px;width:1px;height:663px;background:#c8c8c8;"></div><div class="a" style="left:573px;top:280px;width:1px;height:21px;background:#b4b4b4;"></div><div class="a" style="left:783px;top:301px;width:1px;height:663px;background:#c8c8c8;"></div><div class="a" style="left:783px;top:280px;width:1px;height:21px;background:#b4b4b4;"></div><div class="a" style="left:993px;top:301px;width:1px;height:663px;background:#c8c8c8;"></div><div class="a" style="left:993px;top:280px;width:1px;height:21px;background:#b4b4b4;"></div><div class="a" style="left:1203px;top:301px;width:1px;height:663px;background:#c8c8c8;"></div><div class="a" style="left:1203px;top:280px;width:1px;height:21px;background:#b4b4b4;"></div><div class="a" style="left:1413px;top:301px;width:1px;height:663px;background:#c8c8c8;"></div><div class="a" style="left:1413px;top:280px;width:1px;height:21px;background:#b4b4b4;"></div><div class="a" style="left:1623px;top:301px;width:1px;height:663px;background:#c8c8c8;"></div><div class="a" style="left:1623px;top:280px;width:1px;height:21px;background:#b4b4b4;"></div><div class="a" style="left:1833px;top:301px;width:1px;height:663px;background:#c8c8c8;"></div><div class="a" style="left:1833px;top:280px;width:1px;height:21px;background:#b4b4b4;"></div><div class="a" style="left:34px;top:351px;width:1861px;height:1px;background:#c8c8c8;"></div><div class="a" style="left:0px;top:351px;width:34px;height:1px;background:#c0c0c0;"></div><div class="a" style="left:34px;top:377px;width:1861px;height:1px;background:#c8c8c8;"></div><div class="a" style="left:0px;top:377px;width:34px;height:1px;background:#c0c0c0;"></div><div class="a" style="left:34px;top:423px;width:1861px;height:1px;background:#c8c8c8;"></div><div class="a" style="left:0px;top:423px;width:34px;height:1px;background:#c0c0c0;"></div><div class="a" style="left:34px;top:469px;width:1861px;height:1px;background:#c8c8c8;"></div><div class="a" style="left:0px;top:469px;width:34px;height:1px;background:#c0c0c0;"></div><div class="a" style="left:34px;top:515px;width:1861px;height:1px;background:#c8c8c8;"></div><div class="a" style="left:0px;top:515px;width:34px;height:1px;background:#c0c0c0;"></div><div class="a" style="left:34px;top:561px;width:1861px;height:1px;background:#c8c8c8;"></div><div class="a" style="left:0px;top:561px;width:34px;height:1px;background:#c0c0c0;"></div><div class="a" style="left:34px;top:607px;width:1861px;height:1px;background:#c8c8c8;"></div><div class="a" style="left:0px;top:607px;width:34px;height:1px;background:#c0c0c0;"></div><div class="a" style="left:34px;top:653px;width:1861px;height:1px;background:#c8c8c8;"></div><div class="a" style="left:0px;top:653px;width:34px;height:1px;background:#c0c0c0;"></div><div class="a" style="left:34px;top:679px;width:1861px;height:1px;background:#c8c8c8;"></div><div class="a" style="left:0px;top:679px;width:34px;height:1px;background:#c0c0c0;"></div><div class="a" style="left:34px;top:744px;width:1861px;height:1px;background:#c8c8c8;"></div><div class="a" style="left:0px;top:744px;width:34px;height:1px;background:#c0c0c0;"></div><div class="a" style="left:34px;top:770px;width:1861px;height:1px;background:#c8c8c8;"></div><div class="a" style="left:0px;top:770px;width:34px;height:1px;background:#c0c0c0;"></div><div class="a" style="left:34px;top:835px;width:1861px;height:1px;background:#c8c8c8;"></div><div class="a" style="left:0px;top:835px;width:34px;height:1px;background:#c0c0c0;"></div><div class="a" style="left:34px;top:861px;width:1861px;height:1px;background:#c8c8c8;"></div><div class="a" style="left:0px;top:861px;width:34px;height:1px;background:#c0c0c0;"></div><div class="a" style="left:34px;top:907px;width:1861px;height:1px;background:#c8c8c8;"></div><div class="a" style="left:0px;top:907px;width:34px;height:1px;background:#c0c0c0;"></div><div class="a" style="left:34px;top:933px;width:1861px;height:1px;background:#c8c8c8;"></div><div class="a" style="left:0px;top:933px;width:34px;height:1px;background:#c0c0c0;"></div><div class="a" style="left:34px;top:979px;width:1861px;height:1px;background:#c8c8c8;"></div><div class="a" style="left:0px;top:979px;width:34px;height:1px;background:#c0c0c0;"></div><div class="a" style="left:0px;top:301px;width:1895px;height:1px;background:#9e9e9e;"></div><div class="a" style="left:49px;top:300px;width:105px;height:2px;background:#217346;"></div><div class="a" style="left:34px;top:280px;width:1px;height:684px;background:#a6a6a6;"></div><div class="a" style="left:33px;top:351px;width:2px;height:613px;background:#217346;"></div><div class="a" style="left:1894px;top:301px;width:1px;height:663px;background:#ababab;"></div><svg class="a" style="left:16px;top:283px;" width="16" height="16" viewBox="0 0 16 16"><polygon points="15,1 15,15 1,15" fill="#b4b4b4"/></svg><div class="t" style="left:36.66px;top:282.53px;font-size:16.5px;color:#000;transform:scaleX(1.0062);">A</div><div class="t" style="left:96.65px;top:282.53px;font-size:16.5px;color:#217346;transform:scaleX(1.0091);">B</div><div class="t" style="left:253.55px;top:282.53px;font-size:16.5px;color:#000;transform:scaleX(0.9486);">C</div><div class="t" style="left:462.47px;top:282.53px;font-size:16.5px;color:#000;transform:scaleX(1.0461);">D</div><div class="t" style="left:673.59px;top:282.53px;font-size:16.5px;color:#000;transform:scaleX(0.9294);">E</div><div class="t" style="left:884.04px;top:282.53px;font-size:16.5px;color:#000;transform:scaleX(0.9238);">F</div><div class="t" style="left:1092.43px;top:282.53px;font-size:16.5px;color:#000;transform:scaleX(0.9774);">G</div><div class="t" style="left:1302.61px;top:282.53px;font-size:16.5px;color:#000;transform:scaleX(1.0215);">H</div><div class="t" style="left:1516.31px;top:282.53px;font-size:16.5px;color:#000;transform:scaleX(1.0414);">I</div><div class="t" style="left:1726.31px;top:282.53px;font-size:16.5px;color:#000;transform:scaleX(0.5787);">J</div><div class="t" style="left:12.35px;top:332.53px;font-size:16.5px;color:#000;transform:scaleX(1.1223);">1</div><div class="t" style="left:12.35px;top:358.53px;font-size:16.5px;color:#217346;transform:scaleX(1.1223);">2</div><div class="t" style="left:12.35px;top:404.53px;font-size:16.5px;color:#217346;transform:scaleX(1.1223);">3</div><div class="t" style="left:12.35px;top:450.53px;font-size:16.5px;color:#217346;transform:scaleX(1.1223);">4</div><div class="t" style="left:12.35px;top:496.53px;font-size:16.5px;color:#217346;transform:scaleX(1.1223);">5</div><div class="t" style="left:12.35px;top:542.53px;font-size:16.5px;color:#217346;transform:scaleX(1.1223);">6</div><div class="t" style="left:12.35px;top:588.53px;font-size:16.5px;color:#217346;transform:scaleX(1.1223);">7</div><div class="t" style="left:12.35px;top:634.53px;font-size:16.5px;color:#217346;transform:scaleX(1.1223);">8</div><div class="t" style="left:12.35px;top:660.53px;font-size:16.5px;color:#217346;transform:scaleX(1.1223);">9</div><div class="t" style="left:7.20px;top:725.53px;font-size:16.5px;color:#217346;transform:scaleX(1.1223);">10</div><div class="t" style="left:7.20px;top:751.53px;font-size:16.5px;color:#217346;transform:scaleX(1.2026);">11</div><div class="t" style="left:7.20px;top:816.53px;font-size:16.5px;color:#217346;transform:scaleX(1.1223);">12</div><div class="t" style="left:7.20px;top:842.53px;font-size:16.5px;color:#217346;transform:scaleX(1.1223);">13</div><div class="t" style="left:7.20px;top:888.53px;font-size:16.5px;color:#217346;transform:scaleX(1.1223);">14</div><div class="t" style="left:7.20px;top:914.53px;font-size:16.5px;color:#217346;transform:scaleX(1.1223);">15</div><div class="t" style="left:7.20px;top:960.53px;font-size:16.5px;color:#217346;transform:scaleX(1.1223);">16</div><div class="t" style="left:58.25px;top:333.01px;font-size:17px;color:#000;transform:scaleX(1.1029);">Item Code</div><div class="t" style="left:211.98px;top:333.01px;font-size:17px;color:#000;transform:scaleX(1.1192);">Item Name</div><div class="t" style="left:425.94px;top:333.01px;font-size:17px;color:#000;transform:scaleX(1.0352);">HSN Code</div><div class="t" style="left:639.12px;top:333.01px;font-size:17px;color:#000;transform:scaleX(1.0971);">Shelf Life</div><div class="t" style="left:819.76px;top:333.01px;font-size:17px;color:#000;transform:scaleX(1.1196);">Loyality Allowed</div><div class="t" style="left:999.87px;top:333.01px;font-size:17px;color:#000;transform:scaleX(1.1048);">Batch _ Expiry Optional</div><div class="t" style="left:1230.09px;top:333.01px;font-size:17px;color:#000;transform:scaleX(1.0849);">Allow Sales Return</div><div class="t" style="left:1451.94px;top:333.01px;font-size:17px;color:#000;transform:scaleX(1.0923);">Allow Exchange</div><div class="t" style="left:1645.04px;top:333.01px;font-size:17px;color:#000;transform:scaleX(1.1306);">Warranty in months</div><div class="t" style="left:1842.60px;top:311.01px;font-size:17px;color:#000;transform:scaleX(1.1027);">Allow</div><div class="t" style="left:53.10px;top:359.01px;font-size:17px;color:#000;transform:scaleX(1.1293);">2323298</div><div class="t" style="left:158.10px;top:359.01px;font-size:17px;color:#000;">VIZAG TMT STEEL</div><div class="t" style="left:367.10px;top:359.01px;font-size:17px;color:#000;transform:scaleX(1.1293);">1005</div><div class="t" style="left:577.10px;top:359.01px;font-size:17px;color:#000;transform:scaleX(1.1293);">0</div><div class="t" style="left:787.10px;top:359.01px;font-size:17px;color:#000;transform:scaleX(0.9262);">YES</div><div class="t" style="left:997.10px;top:359.01px;font-size:17px;color:#000;transform:scaleX(1.1129);">Not Applicable</div><div class="t" style="left:1207.10px;top:359.01px;font-size:17px;color:#000;transform:scaleX(0.9767);">Yes</div><div class="t" style="left:1417.10px;top:359.01px;font-size:17px;color:#000;transform:scaleX(1.0501);">No</div><div class="t" style="left:1627.10px;top:359.01px;font-size:17px;color:#000;transform:scaleX(1.0501);">No</div><div class="t" style="left:1837.10px;top:359.01px;font-size:17px;color:#000;transform:scaleX(1.0501);">No</div><svg class="a" style="left:50px;top:352px;" width="7" height="7" viewBox="0 0 7 7"><polygon points="0,0 6,0 0,6" fill="#008000"/></svg><svg class="a" style="left:364px;top:352px;" width="7" height="7" viewBox="0 0 7 7"><polygon points="0,0 6,0 0,6" fill="#008000"/></svg><svg class="a" style="left:574px;top:352px;" width="7" height="7" viewBox="0 0 7 7"><polygon points="0,0 6,0 0,6" fill="#008000"/></svg><div class="t" style="left:53.10px;top:405.01px;font-size:17px;color:#000;transform:scaleX(1.1293);">2323297</div><div class="t" style="left:158.10px;top:383.01px;font-size:17px;color:#000;transform:scaleX(1.0850);">Vizag Tmt Steel Bar Fe</div><div class="t" style="left:158.10px;top:405.01px;font-size:17px;color:#000;transform:scaleX(1.1085);">500 D</div><div class="t" style="left:367.10px;top:405.01px;font-size:17px;color:#000;transform:scaleX(1.1293);">1005</div><div class="t" style="left:577.10px;top:405.01px;font-size:17px;color:#000;transform:scaleX(1.1293);">0</div><div class="t" style="left:787.10px;top:405.01px;font-size:17px;color:#000;transform:scaleX(0.9262);">YES</div><div class="t" style="left:997.10px;top:405.01px;font-size:17px;color:#000;transform:scaleX(1.1129);">Not Applicable</div><div class="t" style="left:1207.10px;top:405.01px;font-size:17px;color:#000;transform:scaleX(0.9767);">Yes</div><div class="t" style="left:1417.10px;top:405.01px;font-size:17px;color:#000;transform:scaleX(1.0501);">No</div><div class="t" style="left:1627.10px;top:405.01px;font-size:17px;color:#000;transform:scaleX(1.0501);">No</div><div class="t" style="left:1837.10px;top:405.01px;font-size:17px;color:#000;transform:scaleX(1.0501);">No</div><svg class="a" style="left:50px;top:378px;" width="7" height="7" viewBox="0 0 7 7"><polygon points="0,0 6,0 0,6" fill="#008000"/></svg><svg class="a" style="left:364px;top:378px;" width="7" height="7" viewBox="0 0 7 7"><polygon points="0,0 6,0 0,6" fill="#008000"/></svg><svg class="a" style="left:574px;top:378px;" width="7" height="7" viewBox="0 0 7 7"><polygon points="0,0 6,0 0,6" fill="#008000"/></svg><div class="t" style="left:53.10px;top:451.01px;font-size:17px;color:#000;transform:scaleX(1.1293);">2323294</div><div class="t" style="left:158.10px;top:429.01px;font-size:17px;color:#000;transform:scaleX(1.0846);">H2O Stainless Steel</div><div class="t" style="left:158.10px;top:451.01px;font-size:17px;color:#000;transform:scaleX(1.1339);">Water Bottle 1000ml</div><div class="t" style="left:367.10px;top:451.01px;font-size:17px;color:#000;transform:scaleX(1.1293);">1009</div><div class="t" style="left:577.10px;top:451.01px;font-size:17px;color:#000;transform:scaleX(1.1293);">0</div><div class="t" style="left:787.10px;top:451.01px;font-size:17px;color:#000;transform:scaleX(0.9262);">YES</div><div class="t" style="left:997.10px;top:451.01px;font-size:17px;color:#000;transform:scaleX(1.1129);">Not Applicable</div><div class="t" style="left:1207.10px;top:451.01px;font-size:17px;color:#000;transform:scaleX(0.9767);">Yes</div><div class="t" style="left:1417.10px;top:451.01px;font-size:17px;color:#000;transform:scaleX(1.0501);">No</div><div class="t" style="left:1627.10px;top:451.01px;font-size:17px;color:#000;transform:scaleX(1.0501);">No</div><div class="t" style="left:1837.10px;top:451.01px;font-size:17px;color:#000;transform:scaleX(1.0501);">No</div><svg class="a" style="left:50px;top:424px;" width="7" height="7" viewBox="0 0 7 7"><polygon points="0,0 6,0 0,6" fill="#008000"/></svg><svg class="a" style="left:364px;top:424px;" width="7" height="7" viewBox="0 0 7 7"><polygon points="0,0 6,0 0,6" fill="#008000"/></svg><svg class="a" style="left:574px;top:424px;" width="7" height="7" viewBox="0 0 7 7"><polygon points="0,0 6,0 0,6" fill="#008000"/></svg><div class="t" style="left:53.10px;top:497.01px;font-size:17px;color:#000;transform:scaleX(1.1293);">10012</div><div class="t" style="left:158.10px;top:475.01px;font-size:17px;color:#000;transform:scaleX(1.0042);">TEAK WOODEN SOFA 3</div><div class="t" style="left:158.10px;top:497.01px;font-size:17px;color:#000;transform:scaleX(0.9579);">SEATER</div><div class="t" style="left:367.10px;top:497.01px;font-size:17px;color:#000;transform:scaleX(1.1293);">1009</div><div class="t" style="left:577.10px;top:497.01px;font-size:17px;color:#000;transform:scaleX(1.1293);">0</div><div class="t" style="left:787.10px;top:497.01px;font-size:17px;color:#000;transform:scaleX(0.9262);">YES</div><div class="t" style="left:997.10px;top:497.01px;font-size:17px;color:#000;transform:scaleX(1.1129);">Not Applicable</div><div class="t" style="left:1207.10px;top:497.01px;font-size:17px;color:#000;transform:scaleX(0.9767);">Yes</div><div class="t" style="left:1417.10px;top:497.01px;font-size:17px;color:#000;transform:scaleX(1.0501);">No</div><div class="t" style="left:1627.10px;top:497.01px;font-size:17px;color:#000;transform:scaleX(1.0501);">No</div><div class="t" style="left:1837.10px;top:497.01px;font-size:17px;color:#000;transform:scaleX(1.0501);">No</div><svg class="a" style="left:50px;top:470px;" width="7" height="7" viewBox="0 0 7 7"><polygon points="0,0 6,0 0,6" fill="#008000"/></svg><svg class="a" style="left:364px;top:470px;" width="7" height="7" viewBox="0 0 7 7"><polygon points="0,0 6,0 0,6" fill="#008000"/></svg><svg class="a" style="left:574px;top:470px;" width="7" height="7" viewBox="0 0 7 7"><polygon points="0,0 6,0 0,6" fill="#008000"/></svg><div class="t" style="left:53.10px;top:543.01px;font-size:17px;color:#000;transform:scaleX(1.1293);">2323291</div><div class="t" style="left:158.10px;top:521.01px;font-size:17px;color:#000;transform:scaleX(1.0284);">IRON BOTTOM  BD65</div><div class="t" style="left:158.10px;top:543.01px;font-size:17px;color:#000;transform:scaleX(0.9785);">TRACK ROLLAR</div><div class="t" style="left:367.10px;top:543.01px;font-size:17px;color:#000;transform:scaleX(1.1293);">1009</div><div class="t" style="left:577.10px;top:543.01px;font-size:17px;color:#000;transform:scaleX(1.1293);">0</div><div class="t" style="left:787.10px;top:543.01px;font-size:17px;color:#000;transform:scaleX(0.9262);">YES</div><div class="t" style="left:997.10px;top:543.01px;font-size:17px;color:#000;transform:scaleX(1.1129);">Not Applicable</div><div class="t" style="left:1207.10px;top:543.01px;font-size:17px;color:#000;transform:scaleX(0.9767);">Yes</div><div class="t" style="left:1417.10px;top:543.01px;font-size:17px;color:#000;transform:scaleX(1.0501);">No</div><div class="t" style="left:1627.10px;top:543.01px;font-size:17px;color:#000;transform:scaleX(1.0501);">No</div><div class="t" style="left:1837.10px;top:543.01px;font-size:17px;color:#000;transform:scaleX(1.0501);">No</div><svg class="a" style="left:50px;top:516px;" width="7" height="7" viewBox="0 0 7 7"><polygon points="0,0 6,0 0,6" fill="#008000"/></svg><svg class="a" style="left:364px;top:516px;" width="7" height="7" viewBox="0 0 7 7"><polygon points="0,0 6,0 0,6" fill="#008000"/></svg><svg class="a" style="left:574px;top:516px;" width="7" height="7" viewBox="0 0 7 7"><polygon points="0,0 6,0 0,6" fill="#008000"/></svg><div class="t" style="left:53.10px;top:589.01px;font-size:17px;color:#000;transform:scaleX(1.1293);">10024</div><div class="t" style="left:158.10px;top:567.01px;font-size:17px;color:#000;transform:scaleX(0.9749);">KALYANA SEERVARISAI</div><div class="t" style="left:158.10px;top:589.01px;font-size:17px;color:#000;transform:scaleX(0.9529);">SET</div><div class="t" style="left:367.10px;top:589.01px;font-size:17px;color:#000;transform:scaleX(1.1293);">1009</div><div class="t" style="left:577.10px;top:589.01px;font-size:17px;color:#000;transform:scaleX(1.1293);">0</div><div class="t" style="left:787.10px;top:589.01px;font-size:17px;color:#000;transform:scaleX(0.9262);">YES</div><div class="t" style="left:997.10px;top:589.01px;font-size:17px;color:#000;transform:scaleX(1.1129);">Not Applicable</div><div class="t" style="left:1207.10px;top:589.01px;font-size:17px;color:#000;transform:scaleX(0.9767);">Yes</div><div class="t" style="left:1417.10px;top:589.01px;font-size:17px;color:#000;transform:scaleX(1.0501);">No</div><div class="t" style="left:1627.10px;top:589.01px;font-size:17px;color:#000;transform:scaleX(1.0501);">No</div><div class="t" style="left:1837.10px;top:589.01px;font-size:17px;color:#000;transform:scaleX(1.0501);">No</div><svg class="a" style="left:50px;top:562px;" width="7" height="7" viewBox="0 0 7 7"><polygon points="0,0 6,0 0,6" fill="#008000"/></svg><svg class="a" style="left:364px;top:562px;" width="7" height="7" viewBox="0 0 7 7"><polygon points="0,0 6,0 0,6" fill="#008000"/></svg><svg class="a" style="left:574px;top:562px;" width="7" height="7" viewBox="0 0 7 7"><polygon points="0,0 6,0 0,6" fill="#008000"/></svg><div class="t" style="left:53.10px;top:635.01px;font-size:17px;color:#000;transform:scaleX(1.1293);">1001</div><div class="t" style="left:158.10px;top:613.01px;font-size:17px;color:#000;transform:scaleX(1.0534);">48 X 20 INCHES 3</div><div class="t" style="left:158.10px;top:635.01px;font-size:17px;color:#000;">DOOR</div><div class="t" style="left:367.10px;top:635.01px;font-size:17px;color:#000;transform:scaleX(1.1293);">1009</div><div class="t" style="left:577.10px;top:635.01px;font-size:17px;color:#000;transform:scaleX(1.1293);">0</div><div class="t" style="left:787.10px;top:635.01px;font-size:17px;color:#000;transform:scaleX(0.9262);">YES</div><div class="t" style="left:997.10px;top:635.01px;font-size:17px;color:#000;transform:scaleX(1.1129);">Not Applicable</div><div class="t" style="left:1207.10px;top:635.01px;font-size:17px;color:#000;transform:scaleX(0.9767);">Yes</div><div class="t" style="left:1417.10px;top:635.01px;font-size:17px;color:#000;transform:scaleX(0.9767);">Yes</div><div class="t" style="left:1627.10px;top:635.01px;font-size:17px;color:#000;transform:scaleX(1.0501);">No</div><div class="t" style="left:1837.10px;top:635.01px;font-size:17px;color:#000;transform:scaleX(1.0501);">No</div><svg class="a" style="left:50px;top:608px;" width="7" height="7" viewBox="0 0 7 7"><polygon points="0,0 6,0 0,6" fill="#008000"/></svg><svg class="a" style="left:364px;top:608px;" width="7" height="7" viewBox="0 0 7 7"><polygon points="0,0 6,0 0,6" fill="#008000"/></svg><svg class="a" style="left:574px;top:608px;" width="7" height="7" viewBox="0 0 7 7"><polygon points="0,0 6,0 0,6" fill="#008000"/></svg><div class="t" style="left:53.10px;top:661.01px;font-size:17px;color:#000;transform:scaleX(1.1293);">10025</div><div class="t" style="left:158.10px;top:661.01px;font-size:17px;color:#000;transform:scaleX(1.0892);">Stainless Steel  Spoon</div><div class="t" style="left:367.10px;top:661.01px;font-size:17px;color:#000;transform:scaleX(1.1293);">1009</div><div class="t" style="left:577.10px;top:661.01px;font-size:17px;color:#000;transform:scaleX(1.1293);">0</div><div class="t" style="left:787.10px;top:661.01px;font-size:17px;color:#000;transform:scaleX(0.9262);">YES</div><div class="t" style="left:997.10px;top:661.01px;font-size:17px;color:#000;transform:scaleX(1.1129);">Not Applicable</div><div class="t" style="left:1207.10px;top:661.01px;font-size:17px;color:#000;transform:scaleX(0.9767);">Yes</div><div class="t" style="left:1417.10px;top:661.01px;font-size:17px;color:#000;transform:scaleX(1.0501);">No</div><div class="t" style="left:1627.10px;top:661.01px;font-size:17px;color:#000;transform:scaleX(1.0501);">No</div><div class="t" style="left:1837.10px;top:661.01px;font-size:17px;color:#000;transform:scaleX(1.0501);">No</div><svg class="a" style="left:50px;top:654px;" width="7" height="7" viewBox="0 0 7 7"><polygon points="0,0 6,0 0,6" fill="#008000"/></svg><svg class="a" style="left:364px;top:654px;" width="7" height="7" viewBox="0 0 7 7"><polygon points="0,0 6,0 0,6" fill="#008000"/></svg><svg class="a" style="left:574px;top:654px;" width="7" height="7" viewBox="0 0 7 7"><polygon points="0,0 6,0 0,6" fill="#008000"/></svg><div class="t" style="left:53.10px;top:726.01px;font-size:17px;color:#000;transform:scaleX(1.1293);">2323289</div><div class="t" style="left:158.10px;top:682.01px;font-size:17px;color:#000;transform:scaleX(0.9938);">COMMON RAIL FUEL</div><div class="t" style="left:158.10px;top:704.01px;font-size:17px;color:#000;transform:scaleX(0.9617);">INJECTION PUMP</div><div class="t" style="left:158.10px;top:726.01px;font-size:17px;color:#000;transform:scaleX(0.9778);">PLUNGER FOR ASHOK</div><div class="t" style="left:367.10px;top:726.01px;font-size:17px;color:#000;transform:scaleX(1.1293);">1009</div><div class="t" style="left:577.10px;top:726.01px;font-size:17px;color:#000;transform:scaleX(1.1293);">0</div><div class="t" style="left:787.10px;top:726.01px;font-size:17px;color:#000;transform:scaleX(0.9262);">YES</div><div class="t" style="left:997.10px;top:726.01px;font-size:17px;color:#000;transform:scaleX(1.1129);">Not Applicable</div><div class="t" style="left:1207.10px;top:726.01px;font-size:17px;color:#000;transform:scaleX(0.9767);">Yes</div><div class="t" style="left:1417.10px;top:726.01px;font-size:17px;color:#000;transform:scaleX(1.0501);">No</div><div class="t" style="left:1627.10px;top:726.01px;font-size:17px;color:#000;transform:scaleX(1.0501);">No</div><div class="t" style="left:1837.10px;top:726.01px;font-size:17px;color:#000;transform:scaleX(1.0501);">No</div><svg class="a" style="left:50px;top:680px;" width="7" height="7" viewBox="0 0 7 7"><polygon points="0,0 6,0 0,6" fill="#008000"/></svg><svg class="a" style="left:364px;top:680px;" width="7" height="7" viewBox="0 0 7 7"><polygon points="0,0 6,0 0,6" fill="#008000"/></svg><svg class="a" style="left:574px;top:680px;" width="7" height="7" viewBox="0 0 7 7"><polygon points="0,0 6,0 0,6" fill="#008000"/></svg><div class="t" style="left:53.10px;top:752.01px;font-size:17px;color:#000;transform:scaleX(1.1293);">470</div><div class="t" style="left:158.10px;top:752.01px;font-size:17px;color:#000;transform:scaleX(0.9963);">MACHINE</div><div class="t" style="left:367.10px;top:752.01px;font-size:17px;color:#000;transform:scaleX(1.1293);">1009</div><div class="t" style="left:577.10px;top:752.01px;font-size:17px;color:#000;transform:scaleX(1.1293);">0</div><div class="t" style="left:787.10px;top:752.01px;font-size:17px;color:#000;transform:scaleX(0.9262);">YES</div><div class="t" style="left:997.10px;top:752.01px;font-size:17px;color:#000;transform:scaleX(1.1129);">Not Applicable</div><div class="t" style="left:1207.10px;top:752.01px;font-size:17px;color:#000;transform:scaleX(0.9767);">Yes</div><div class="t" style="left:1417.10px;top:752.01px;font-size:17px;color:#000;transform:scaleX(1.0501);">No</div><div class="t" style="left:1627.10px;top:752.01px;font-size:17px;color:#000;transform:scaleX(1.0501);">No</div><div class="t" style="left:1837.10px;top:752.01px;font-size:17px;color:#000;transform:scaleX(1.0501);">No</div><svg class="a" style="left:50px;top:745px;" width="7" height="7" viewBox="0 0 7 7"><polygon points="0,0 6,0 0,6" fill="#008000"/></svg><svg class="a" style="left:364px;top:745px;" width="7" height="7" viewBox="0 0 7 7"><polygon points="0,0 6,0 0,6" fill="#008000"/></svg><svg class="a" style="left:574px;top:745px;" width="7" height="7" viewBox="0 0 7 7"><polygon points="0,0 6,0 0,6" fill="#008000"/></svg><div class="t" style="left:53.10px;top:817.01px;font-size:17px;color:#000;transform:scaleX(1.1293);">2323290</div><div class="t" style="left:158.10px;top:773.01px;font-size:17px;color:#000;transform:scaleX(0.9868);">PISTON ENGINE FOR</div><div class="t" style="left:158.10px;top:795.01px;font-size:17px;color:#000;transform:scaleX(1.0151);">HONDA CITY 3RD GEN -</div><div class="t" style="left:158.10px;top:817.01px;font-size:17px;color:#000;transform:scaleX(1.0759);">13010P3MK00</div><div class="t" style="left:367.10px;top:817.01px;font-size:17px;color:#000;transform:scaleX(1.1293);">1009</div><div class="t" style="left:577.10px;top:817.01px;font-size:17px;color:#000;transform:scaleX(1.1293);">0</div><div class="t" style="left:787.10px;top:817.01px;font-size:17px;color:#000;transform:scaleX(0.9262);">YES</div><div class="t" style="left:997.10px;top:817.01px;font-size:17px;color:#000;transform:scaleX(1.1129);">Not Applicable</div><div class="t" style="left:1207.10px;top:817.01px;font-size:17px;color:#000;transform:scaleX(0.9767);">Yes</div><div class="t" style="left:1417.10px;top:817.01px;font-size:17px;color:#000;transform:scaleX(1.0501);">No</div><div class="t" style="left:1627.10px;top:817.01px;font-size:17px;color:#000;transform:scaleX(1.0501);">No</div><div class="t" style="left:1837.10px;top:817.01px;font-size:17px;color:#000;transform:scaleX(1.0501);">No</div><svg class="a" style="left:50px;top:771px;" width="7" height="7" viewBox="0 0 7 7"><polygon points="0,0 6,0 0,6" fill="#008000"/></svg><svg class="a" style="left:364px;top:771px;" width="7" height="7" viewBox="0 0 7 7"><polygon points="0,0 6,0 0,6" fill="#008000"/></svg><svg class="a" style="left:574px;top:771px;" width="7" height="7" viewBox="0 0 7 7"><polygon points="0,0 6,0 0,6" fill="#008000"/></svg><div class="t" style="left:53.10px;top:843.01px;font-size:17px;color:#000;transform:scaleX(1.1293);">2323295</div><div class="t" style="left:158.10px;top:843.01px;font-size:17px;color:#000;transform:scaleX(1.0978);">Eat Insulated Lunch Box</div><div class="t" style="left:367.10px;top:843.01px;font-size:17px;color:#000;transform:scaleX(1.1293);">1009</div><div class="t" style="left:577.10px;top:843.01px;font-size:17px;color:#000;transform:scaleX(1.1293);">0</div><div class="t" style="left:787.10px;top:843.01px;font-size:17px;color:#000;transform:scaleX(0.9262);">YES</div><div class="t" style="left:997.10px;top:843.01px;font-size:17px;color:#000;transform:scaleX(1.1129);">Not Applicable</div><div class="t" style="left:1207.10px;top:843.01px;font-size:17px;color:#000;transform:scaleX(0.9767);">Yes</div><div class="t" style="left:1417.10px;top:843.01px;font-size:17px;color:#000;transform:scaleX(1.0501);">No</div><div class="t" style="left:1627.10px;top:843.01px;font-size:17px;color:#000;transform:scaleX(1.0501);">No</div><div class="t" style="left:1837.10px;top:843.01px;font-size:17px;color:#000;transform:scaleX(1.0501);">No</div><svg class="a" style="left:50px;top:836px;" width="7" height="7" viewBox="0 0 7 7"><polygon points="0,0 6,0 0,6" fill="#008000"/></svg><svg class="a" style="left:364px;top:836px;" width="7" height="7" viewBox="0 0 7 7"><polygon points="0,0 6,0 0,6" fill="#008000"/></svg><svg class="a" style="left:574px;top:836px;" width="7" height="7" viewBox="0 0 7 7"><polygon points="0,0 6,0 0,6" fill="#008000"/></svg><div class="t" style="left:53.10px;top:889.01px;font-size:17px;color:#000;transform:scaleX(1.1293);">10022</div><div class="t" style="left:158.10px;top:867.01px;font-size:17px;color:#000;transform:scaleX(0.9749);">KALYANA SEERVARISAI</div><div class="t" style="left:158.10px;top:889.01px;font-size:17px;color:#000;transform:scaleX(0.9568);">SILVERS</div><div class="t" style="left:367.10px;top:889.01px;font-size:17px;color:#000;transform:scaleX(1.1293);">1009</div><div class="t" style="left:577.10px;top:889.01px;font-size:17px;color:#000;transform:scaleX(1.1293);">0</div><div class="t" style="left:787.10px;top:889.01px;font-size:17px;color:#000;transform:scaleX(0.9262);">YES</div><div class="t" style="left:997.10px;top:889.01px;font-size:17px;color:#000;transform:scaleX(1.1129);">Not Applicable</div><div class="t" style="left:1207.10px;top:889.01px;font-size:17px;color:#000;transform:scaleX(0.9767);">Yes</div><div class="t" style="left:1417.10px;top:889.01px;font-size:17px;color:#000;transform:scaleX(1.0501);">No</div><div class="t" style="left:1627.10px;top:889.01px;font-size:17px;color:#000;transform:scaleX(1.0501);">No</div><div class="t" style="left:1837.10px;top:889.01px;font-size:17px;color:#000;transform:scaleX(1.0501);">No</div><svg class="a" style="left:50px;top:862px;" width="7" height="7" viewBox="0 0 7 7"><polygon points="0,0 6,0 0,6" fill="#008000"/></svg><svg class="a" style="left:364px;top:862px;" width="7" height="7" viewBox="0 0 7 7"><polygon points="0,0 6,0 0,6" fill="#008000"/></svg><svg class="a" style="left:574px;top:862px;" width="7" height="7" viewBox="0 0 7 7"><polygon points="0,0 6,0 0,6" fill="#008000"/></svg><div class="t" style="left:53.10px;top:915.01px;font-size:17px;color:#000;transform:scaleX(1.1293);">2323276</div><div class="t" style="left:158.10px;top:915.01px;font-size:17px;color:#000;transform:scaleX(0.9907);">.SUGAR REPACK 2 KG</div><div class="t" style="left:367.10px;top:915.01px;font-size:17px;color:#000;transform:scaleX(1.1293);">1701</div><div class="t" style="left:577.10px;top:915.01px;font-size:17px;color:#000;transform:scaleX(1.1293);">0</div><div class="t" style="left:787.10px;top:915.01px;font-size:17px;color:#000;transform:scaleX(0.9262);">YES</div><div class="t" style="left:997.10px;top:915.01px;font-size:17px;color:#000;transform:scaleX(1.1129);">Not Applicable</div><div class="t" style="left:1207.10px;top:915.01px;font-size:17px;color:#000;transform:scaleX(0.9767);">Yes</div><div class="t" style="left:1417.10px;top:915.01px;font-size:17px;color:#000;transform:scaleX(1.0501);">No</div><div class="t" style="left:1627.10px;top:915.01px;font-size:17px;color:#000;transform:scaleX(1.0501);">No</div><div class="t" style="left:1837.10px;top:915.01px;font-size:17px;color:#000;transform:scaleX(1.0501);">No</div><svg class="a" style="left:50px;top:908px;" width="7" height="7" viewBox="0 0 7 7"><polygon points="0,0 6,0 0,6" fill="#008000"/></svg><svg class="a" style="left:364px;top:908px;" width="7" height="7" viewBox="0 0 7 7"><polygon points="0,0 6,0 0,6" fill="#008000"/></svg><svg class="a" style="left:574px;top:908px;" width="7" height="7" viewBox="0 0 7 7"><polygon points="0,0 6,0 0,6" fill="#008000"/></svg><div class="t" style="left:53.10px;top:961.01px;font-size:17px;color:#000;transform:scaleX(1.1293);">22</div><div class="t" style="left:158.10px;top:939.01px;font-size:17px;color:#000;transform:scaleX(0.9645);">FITNESS ACCESSORIES</div><div class="t" style="left:158.10px;top:961.01px;font-size:17px;color:#000;transform:scaleX(0.9588);">YOGA STRAP GREY</div><div class="t" style="left:367.10px;top:961.01px;font-size:17px;color:#000;transform:scaleX(1.1293);">1701</div><div class="t" style="left:577.10px;top:961.01px;font-size:17px;color:#000;transform:scaleX(1.1293);">0</div><div class="t" style="left:787.10px;top:961.01px;font-size:17px;color:#000;transform:scaleX(0.9262);">YES</div><div class="t" style="left:997.10px;top:961.01px;font-size:17px;color:#000;transform:scaleX(1.1129);">Not Applicable</div><div class="t" style="left:1207.10px;top:961.01px;font-size:17px;color:#000;transform:scaleX(0.9767);">Yes</div><div class="t" style="left:1417.10px;top:961.01px;font-size:17px;color:#000;transform:scaleX(1.0501);">No</div><div class="t" style="left:1627.10px;top:961.01px;font-size:17px;color:#000;transform:scaleX(1.0501);">No</div><div class="t" style="left:1837.10px;top:961.01px;font-size:17px;color:#000;transform:scaleX(1.0501);">No</div><svg class="a" style="left:50px;top:934px;" width="7" height="7" viewBox="0 0 7 7"><polygon points="0,0 6,0 0,6" fill="#008000"/></svg><svg class="a" style="left:364px;top:934px;" width="7" height="7" viewBox="0 0 7 7"><polygon points="0,0 6,0 0,6" fill="#008000"/></svg><svg class="a" style="left:574px;top:934px;" width="7" height="7" viewBox="0 0 7 7"><polygon points="0,0 6,0 0,6" fill="#008000"/></svg><div class="a" style="left:48px;top:350px;width:107px;height:3px;background:#217346;"></div><div class="a" style="left:48px;top:350px;width:3px;height:619px;background:#217346;"></div><div class="a" style="left:152px;top:350px;width:3px;height:619px;background:#217346;"></div><div class="a" style="left:53px;top:351px;width:97px;height:2px;background:;background:repeating-linear-gradient(to right,#fff 0 2px,transparent 2px 9px)"></div><div class="a" style="left:49px;top:355px;width:2px;height:614px;background:;background:repeating-linear-gradient(to bottom,#fff 0 2px,transparent 2px 9px)"></div><div class="a" style="left:152px;top:354px;width:2px;height:614px;background:;background:repeating-linear-gradient(to bottom,#fff 0 2px,transparent 2px 9px)"></div><div class="a" style="left:155px;top:352px;width:25px;height:25px;background:#fff;border:1px solid #b4b4b4"></div><svg class="a" style="left:155px;top:352px;" width="25" height="25" viewBox="0 0 25 25"><polygon points="12.5,3.5 21.5,12.5 12.5,21.5 3.5,12.5" fill="#ffe25a" stroke="#8a8aa0" stroke-width="0.8"/><rect x="11.6" y="7" width="1.8" height="7" fill="#888"/><circle cx="12.5" cy="16.5" r="1.1" fill="#888"/></svg></div></div><div class="a" style="left:1895px;top:280px;width:24px;height:684px;background:#e6e6e6;"></div><div class="a" style="left:1898px;top:301px;width:18px;height:662px;background:#dadada;"></div><div class="a" style="left:1898px;top:282px;width:18px;height:19px;background:#fff;border:1px solid #d4d4d4"></div><svg class="a" style="left:1903px;top:289px;" width="8" height="5" viewBox="0 0 8 5"><polygon points="0,4 8,4 4,0" fill="#777"/></svg><div class="a" style="left:1898px;top:301px;width:18px;height:68px;background:#fff;border:1px solid #c6c6c6"></div><div class="a" style="left:1898px;top:946px;width:19px;height:18px;background:#fff;border:1px solid #d4d4d4"></div><svg class="a" style="left:1903px;top:953px;" width="10" height="6" viewBox="0 0 10 6"><polygon points="0,0 9,0 4.5,5" fill="#777"/></svg><div class="a" style="left:0px;top:964px;width:1919px;height:29px;background:#e6e6e6;"></div><div class="a" style="left:0px;top:964px;width:1895px;height:1px;background:#ababab;"></div><svg class="a" style="left:28px;top:971px;" width="8" height="12" viewBox="0 0 8 12"><polygon points="6,1 6,11 1,6" fill="#c0c0c0"/></svg><svg class="a" style="left:56px;top:971px;" width="8" height="12" viewBox="0 0 8 12"><polygon points="2,1 2,11 7,6" fill="#c0c0c0"/></svg><div class="a" style="left:103px;top:964px;width:84px;height:26px;background:#fff;border-bottom:2px solid #217346;border-left:1px solid #c6c6c6;border-right:1px solid #c6c6c6"></div><div class="t" style="left:115.60px;top:967.46px;font-size:16px;color:#217346;font-weight:bold;transform:scaleX(1.0156);">Sheet 1</div><svg class="a" style="left:219px;top:968px;" width="22" height="22" viewBox="0 0 22 22"><circle cx="11" cy="11" r="9.5" fill="none" stroke="#777" stroke-width="1.3"/><path d="M11 5.5v11M5.5 11h11" stroke="#777" stroke-width="1.6"/></svg><div class="a" style="left:0px;top:993px;width:1919px;height:1px;background:#c6c6c6;"></div><svg class="a" style="left:1147px;top:972px;" width="6" height="18" viewBox="0 0 6 18"><rect x="1" y="1" width="3" height="3" fill="#a0a0a0"/><rect x="1" y="7" width="3" height="3" fill="#a0a0a0"/><rect x="1" y="13" width="3" height="3" fill="#a0a0a0"/></svg><div class="a" style="left:1167px;top:969px;width:709px;height:18px;background:#dadada;"></div><div class="a" style="left:1167px;top:969px;width:18px;height:18px;background:#fff;border:1px solid #d4d4d4"></div><svg class="a" style="left:1173px;top:974px;" width="6" height="8" viewBox="0 0 6 8"><polygon points="5,0 5,8 0,4" fill="#777"/></svg><div class="a" style="left:1186px;top:969px;width:52px;height:18px;background:#fff;border:1px solid #c6c6c6"></div><div class="a" style="left:1876px;top:969px;width:18px;height:18px;background:#fff;border:1px solid #d4d4d4"></div><svg class="a" style="left:1883px;top:974px;" width="6" height="10" viewBox="0 0 6 10"><polygon points="0,0 0,9 5,4.5" fill="#777"/></svg><div class="a" style="left:0px;top:994px;width:1919px;height:26px;background:#f1f1f1;"></div><div class="t" style="left:7.30px;top:999.50px;font-size:13px;color:#444;transform:scaleX(0.9852);">Select destination and press ENTER or choose Paste</div><div class="t" style="left:1500.00px;top:999.50px;font-size:13px;color:#444;transform:scaleX(0.9748);">Count: 157</div><div class="a" style="left:1582px;top:994px;width:41px;height:26px;background:#c6c6c6;"></div><svg class="a" style="left:1595px;top:999px;" width="14" height="14" viewBox="0 0 14 14"><path d="M0 0.5h13M0 4.5h13M0 8.5h13M0 12.5h13M0.5 0v13M4.5 0v13M8.5 0v13M12.5 0v13" stroke="#6a6a6a" stroke-width="1"/><rect x="1" y="1" width="3" height="3" fill="#9a9a9a"/><rect x="5" y="1" width="3" height="3" fill="#9a9a9a"/><rect x="9" y="1" width="3" height="3" fill="#9a9a9a"/><rect x="1" y="5" width="3" height="3" fill="#9a9a9a"/><rect x="5" y="5" width="3" height="3" fill="#9a9a9a"/><rect x="9" y="5" width="3" height="3" fill="#9a9a9a"/><rect x="1" y="9" width="3" height="3" fill="#9a9a9a"/><rect x="5" y="9" width="3" height="3" fill="#9a9a9a"/><rect x="9" y="9" width="3" height="3" fill="#9a9a9a"/></svg><svg class="a" style="left:1636px;top:999px;" width="15" height="14" viewBox="0 0 15 14"><rect x="0.5" y="0.5" width="13" height="12" fill="none" stroke="#666"/><rect x="3.5" y="2.5" width="7" height="8" fill="none" stroke="#666"/><path d="M5 4.5h4M5 6.5h4M5 8.5h4" stroke="#666"/></svg><svg class="a" style="left:1677px;top:999px;" width="15" height="14" viewBox="0 0 15 14"><rect x="0.5" y="0.5" width="13" height="12" fill="none" stroke="#666"/><path d="M4.5 0.5v6.5h5V0.5M7 0.5v6.5" fill="none" stroke="#666"/></svg><div class="a" style="left:1709px;top:1005px;width:10px;height:2px;background:#555;"></div><div class="a" style="left:1723px;top:1005px;width:126px;height:1px;background:#a0a0a0;"></div><div class="a" style="left:1783px;top:998px;width:4px;height:15px;background:#666;"></div><div class="a" style="left:1853px;top:1005px;width:11px;height:2px;background:#555;"></div><div class="a" style="left:1857.5px;top:1000.5px;width:2px;height:11px;background:#555;"></div><div class="t" style="left:1880.00px;top:999.50px;font-size:13px;color:#444;transform:scaleX(0.9324);">100%</div><div class="a" style="left:0px;top:1020px;width:1919px;height:3px;background:#1d5639;"></div></body></html>
